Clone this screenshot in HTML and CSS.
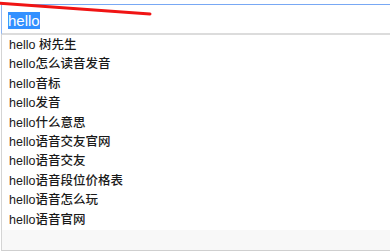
FILE: index.html
```html
<!DOCTYPE html>
<html lang="zh-CN">
<head>
<meta charset="utf-8">
<link rel="stylesheet" href="styles.css">
</head>
<body>
<div class="box">
  <div class="input"><span class="sel">hello</span></div>
  <ul class="list">
    <li>hello 树先生</li>
    <li>hello怎么读音发音</li>
    <li>hello音标</li>
    <li>hello发音</li>
    <li>hello什么意思</li>
    <li>hello语音交友官网</li>
    <li>hello语音交友</li>
    <li>hello语音段位价格表</li>
    <li>hello语音怎么玩</li>
    <li>hello语音官网</li>
  </ul>
  <div class="foot"></div>
</div>
<svg class="mark" width="160" height="20" viewBox="0 0 160 20"><line x1="-2" y1="3" x2="150" y2="14" stroke="#f01414" stroke-width="3" stroke-linecap="round"/></svg>
</body>
</html>
```
FILE: styles.css
```css
html, body { margin: 0; padding: 0; background: #fff; }
body { position: relative; width: 390px; height: 252px; overflow: hidden;
  font-family: "Liberation Sans", "Noto Sans CJK SC", sans-serif; }
.box { margin: 4px 0 0 1px; border-top: 1px solid #78a8f4; border-left: 1px solid #d4d4d4; border-bottom: 1px solid #cfcfcf; }
.input { height: 28px; border-left: 1px solid #8fb6f2; margin-left: -1px; border-bottom: 2px solid #dcdcdc; display: flex; align-items: center; padding-left: 6px; }
.sel { background: #3390ff; color: #fff; font-size: 15px; line-height: 17px; margin-top: 2px; }
.list { list-style: none; margin: 0; padding: 1px 0 0; }
.list li { height: 19.4px; line-height: 19.4px; font-size: 12.5px; font-weight: 500; color: #1a1a1a; padding-left: 7px; white-space: nowrap; }
.foot { height: 20px; background: #f8f8f8; }
.mark { position: absolute; left: 0; top: 0; }
```
